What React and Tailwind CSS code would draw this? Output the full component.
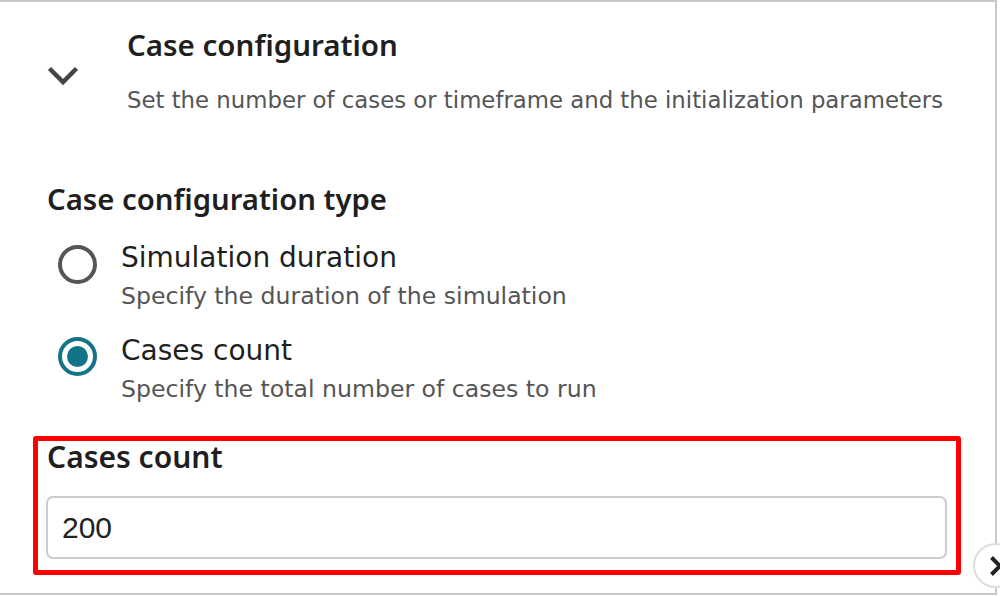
import React from "react";

const body = { fontFamily: "'DejaVu Sans', sans-serif" };
const heading = { fontFamily: "'Noto Sans', sans-serif" };

const Radio = ({ checked }) => (
  <div
    className={
      "mt-[4.5px] flex h-[39px] w-[39px] shrink-0 items-center justify-center rounded-full border-4 " +
      (checked ? "border-[#137488]" : "border-[#555555]")
    }
  >
    {checked && <div className="h-[21px] w-[21px] rounded-full bg-[#137488]" />}
  </div>
);

const Option = ({ checked, label, hint, className }) => (
  <div className={"flex gap-[24px] pl-[11px] " + (className || "")} style={body}>
    <Radio checked={checked} />
    <div>
      <div className="text-[28px] leading-[36px] text-[#1f1f1f]">{label}</div>
      <div className="mt-[5px] text-[23.6px] leading-[30px] text-[#555555]">{hint}</div>
    </div>
  </div>
);

export default function App() {
  return (
    <div className="relative h-[596px] w-[1000px] overflow-hidden bg-white" style={heading}>
      <div className="h-[595px] w-[997px] border-y-2 border-r-2 border-[#c8c8c8] pl-[47px] pt-[25px]">
        <div className="flex">
          <div className="w-[80px] shrink-0 pt-[39px]">
            <svg width="32" height="20" viewBox="0 0 32 20" fill="none">
              <path d="M2.5 2.5 L16 16 L29.5 2.5" stroke="#444444" strokeWidth="4.5" />
            </svg>
          </div>
          <div>
            <div className="text-[29.5px] font-semibold leading-[36px] text-[#1f1f1f]">
              Case configuration
            </div>
            <div className="mt-[22px] text-[22.8px] leading-[30px] text-[#555555]" style={body}>
              Set the number of cases or timeframe and the initialization parameters
            </div>
          </div>
        </div>

        <div className="mt-[66px] text-[29.3px] font-semibold leading-[36px] text-[#1f1f1f]">
          Case configuration type
        </div>

        <Option
          className="mt-[23px]"
          label="Simulation duration"
          hint="Specify the duration of the simulation"
        />
        <Option
          className="mt-[21.5px]"
          checked
          label="Cases count"
          hint="Specify the total number of cases to run"
        />

        <div className="-ml-[14px] mt-[32.5px] w-[928px] rounded-[3px] border-[5px] border-[#ff0000] pb-[11px] pl-[8px] pr-[9px]">
          <div className="pl-[1px] text-[30px] font-semibold leading-[32px] text-[#1f1f1f]">
            Cases count
          </div>
          <div className="mt-[23px] flex h-[63px] items-center rounded-[7px] border-2 border-[#cccccc] pl-[14px]">
            <span
              className="text-[30px] text-[#222222]"
              style={{ fontFamily: "'Liberation Sans', Arial, sans-serif" }}
            >
              200
            </span>
          </div>
        </div>
      </div>

      <div className="absolute left-[973px] top-[543px] flex h-[45px] w-[45px] items-center rounded-full border-2 border-[#dddddd] bg-white pl-[14px]">
        <svg width="14" height="22" viewBox="0 0 14 22" fill="none">
          <path d="M2.5 2.5 L11 11 L2.5 19.5" stroke="#222222" strokeWidth="4" />
        </svg>
      </div>
    </div>
  );
}
